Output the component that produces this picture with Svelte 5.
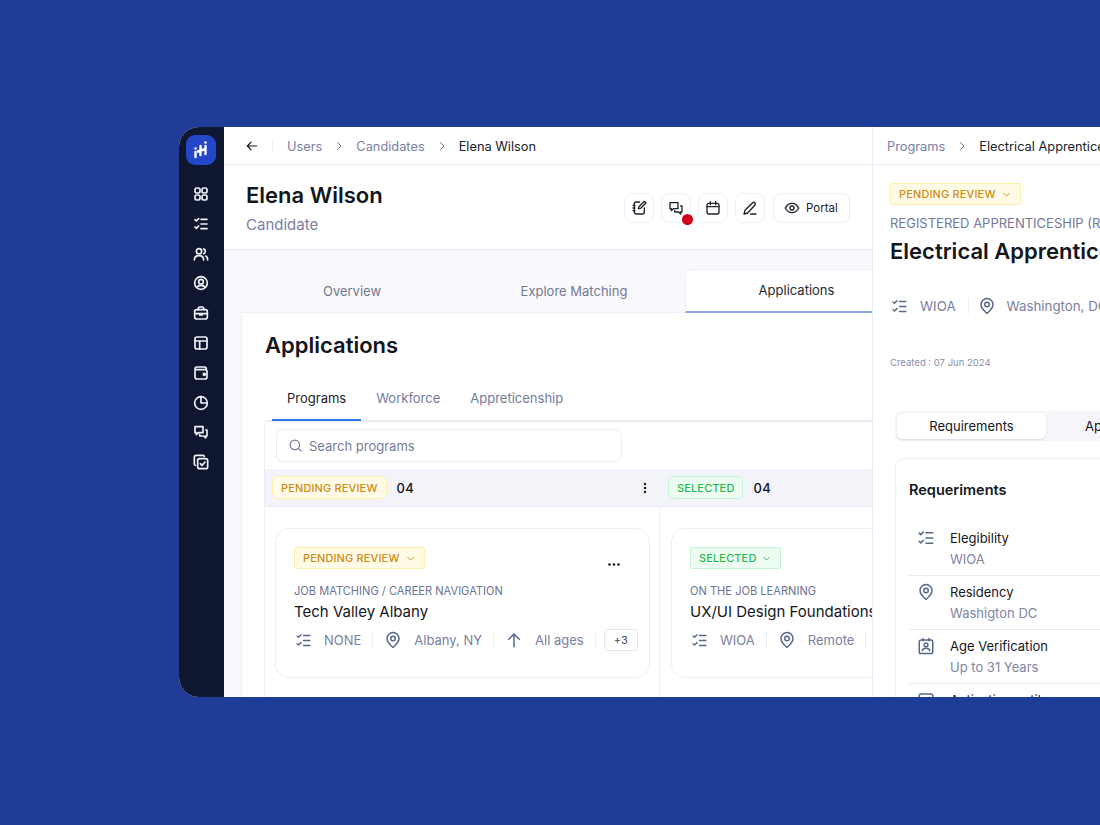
<script>
	const navIcons = ['grid', 'checks', 'users', 'account', 'case', 'table', 'wallet', 'pie', 'chat', 'copycheck'];
	const meta1 = [
		{ icon: 'checks', text: 'NONE' },
		{ icon: 'pin', text: 'Albany, NY' },
		{ icon: 'up', text: 'All ages' }
	];
	const meta2 = [
		{ icon: 'checks', text: 'WIOA' },
		{ icon: 'pin', text: 'Remote' }
	];
	const reqs = [
		{ icon: 'checks', title: 'Elegibility', value: 'WIOA' },
		{ icon: 'pin', title: 'Residency', value: 'Washigton DC' },
		{ icon: 'badge', title: 'Age Verification', value: 'Up to 31 Years' },
		{ icon: 'card', title: 'Activation until', value: '' }
	];
</script>

{#snippet icon(name, size = 16)}
	<svg class="ico" width={size} height={size} viewBox="0 0 24 24" fill="none" stroke="currentColor" stroke-width="2" stroke-linecap="round" stroke-linejoin="round">
		{#if name === 'grid'}
			<rect x="3" y="3" width="7.500" height="7.500" rx="2.500" /><rect x="13.500" y="3" width="7.500" height="7.500" rx="2.500" /><rect x="3" y="13.500" width="7.500" height="7.500" rx="2.500" /><rect x="13.500" y="13.500" width="7.500" height="7.500" rx="2.500" />
		{:else if name === 'checks'}
			<path d="M3 5.500l2 2 3.500-3.500M3 16.500l2 2 3.500-3.500M12 5h9M12 12h9M12 19h9" />
		{:else if name === 'users'}
			<circle cx="9" cy="8" r="4" /><path d="M2 21c0-4 3-6.500 7-6.500s7 2.500 7 6.500M16 4.300a4 4 0 0 1 0 7.400M19 15c2 .8 3 3 3 6" />
		{:else if name === 'account'}
			<circle cx="12" cy="12" r="9.500" /><circle cx="12" cy="10" r="3.500" /><path d="M6 18.500c1.500-2 3.500-3 6-3s4.500 1 6 3" />
		{:else if name === 'case'}
			<rect x="2.500" y="7" width="19" height="14" rx="3" /><path d="M8 7V5a2 2 0 0 1 2-2h4a2 2 0 0 1 2 2v2M2.500 13h19M10 13v2h4v-2" />
		{:else if name === 'table'}
			<rect x="3" y="3" width="18" height="18" rx="3" /><path d="M3 9h18M10 9v12" />
		{:else if name === 'wallet'}
			<path d="M20 7V6a3 3 0 0 0-3-3H6a3 3 0 0 0-3 3v12a3 3 0 0 0 3 3h12a3 3 0 0 0 3-3V10a3 3 0 0 0-3-3H3" /><circle cx="17" cy="14" r="1.500" />
		{:else if name === 'pie'}
			<circle cx="12" cy="12" r="9.500" /><path d="M12 2.500V12h9.500" />
		{:else if name === 'chat'}
			<path d="M3 4h12v9H8l-3 3v-3H3zM19 9h2v9h-2v3l-3-3h-6v-2" />
		{:else if name === 'copycheck'}
			<rect x="7" y="7" width="15" height="15" rx="3" /><path d="M17 3.500A2.500 2.500 0 0 0 15 2H5a3 3 0 0 0-3 3v10a2.500 2.500 0 0 0 1.500 2M11 14.500l2.500 2.500 4.500-5" />
		{:else if name === 'note'}
			<path d="M13 3H8a3 3 0 0 0-3 3v12a3 3 0 0 0 3 3h9a3 3 0 0 0 3-3v-6M3 8h3M3 12h3M3 16h3M11 13l1-3 8-8 2.500 2.500-8 8z" />
		{:else if name === 'calendar'}
			<rect x="3" y="5" width="18" height="16" rx="3" /><path d="M3 10h18M8 2.500V7M16 2.500V7" />
		{:else if name === 'pen'}
			<path d="M3 21l1.500-5.500L16 4a2.500 2.500 0 0 1 3.500 3.500L8.500 19.500zM13 21h8" />
		{:else if name === 'eye'}
			<path d="M2 12c2.500-4.500 6-7 10-7s7.500 2.500 10 7c-2.500 4.500-6 7-10 7s-7.500-2.500-10-7z" /><circle cx="12" cy="12" r="3" />
		{:else if name === 'pin'}
			<path d="M12 22c-4-3.500-8-7.500-8-12a8 8 0 0 1 16 0c0 4.500-4 8.500-8 12z" /><circle cx="12" cy="10" r="3" />
		{:else if name === 'up'}
			<path d="M12 21V4M5 11l7-7 7 7" />
		{:else if name === 'badge'}
			<rect x="3" y="4" width="18" height="18" rx="2.500" /><path d="M8 2v3M16 2v3" /><circle cx="12" cy="10.500" r="2.500" /><path d="M7 18c.6-2 2.500-3 5-3s4.400 1 5 3" />
		{:else if name === 'card'}
			<rect x="3" y="4" width="18" height="16" rx="2.500" /><path d="M3 10h18" />
		{:else if name === 'search'}
			<circle cx="11" cy="11" r="7.500" /><path d="M17 17l4 4" />
		{:else if name === 'chev'}
			<path d="M6 9.500l6 6 6-6" />
		{:else if name === 'left'}
			<path d="M20 12H4M10.500 5.500L4 12l6.500 6.500" />
		{:else if name === 'right'}
			<path d="M9 5l7 7-7 7" />
		{/if}
	</svg>
{/snippet}

{#snippet metaRow(items)}
	<div class="meta">
		{#each items as m}
			<span class="meta-item">
				<span class="meta-ico">{@render icon(m.icon, m.icon === 'checks' ? 17 : 18)}</span>
				<span>{m.text}</span>
			</span>
			<span class="vline"></span>
		{/each}
		{#if items.length === 3}
			<span class="more">+3</span>
		{/if}
	</div>
{/snippet}

<div class="page">
	<div class="frame">
		<aside class="sidebar">
			<div class="logo">
				<svg width="16" height="20" viewBox="0 0 16 20" fill="none" stroke="#fff" stroke-width="2.400" stroke-linecap="round">
					<path d="M2.500 12v5M7.500 6v9M12.500 6v8M5 11.500l6-2" />
					<circle cx="2.500" cy="8.500" r="1.200" fill="#fff" stroke="none" />
					<circle cx="12.500" cy="2.500" r="1.300" fill="#fff" stroke="none" />
				</svg>
			</div>
			<nav class="nav">
				{#each navIcons as n}
					<span class="nav-item">{@render icon(n, 16)}</span>
				{/each}
			</nav>
		</aside>

		<main class="main">
			<div class="crumbs">
				<span class="back">{@render icon('left', 14)}</span>
				<span class="crumb-sep"></span>
				<span class="crumb">Users</span>
				<span class="chev">{@render icon('right', 12)}</span>
				<span class="crumb">Candidates</span>
				<span class="chev">{@render icon('right', 12)}</span>
				<span class="crumb current">Elena Wilson</span>
			</div>

			<header class="head">
				<div>
					<h1>Elena Wilson</h1>
					<p>Candidate</p>
				</div>
				<div class="actions">
					<button class="act">{@render icon('note', 16)}</button>
					<button class="act">
						{@render icon('chat', 16)}
						<span class="dot"></span>
					</button>
					<button class="act">{@render icon('calendar', 16)}</button>
					<button class="act">{@render icon('pen', 16)}</button>
					<button class="act portal">{@render icon('eye', 16)}<span>Portal</span></button>
				</div>
			</header>

			<div class="body">
				<div class="tabs">
					<span class="tab">Overview</span>
					<span class="tab">Explore Matching</span>
					<span class="tab active">Applications</span>
				</div>

				<section class="apps">
					<h2>Applications</h2>
					<div class="subtabs">
						<span class="sub active">Programs</span>
						<span class="sub">Workforce</span>
						<span class="sub">Appreticenship</span>
					</div>

					<div class="board">
						<div class="search-row">
							<div class="search">
								{@render icon('search', 15)}
								<span>Search programs</span>
							</div>
						</div>

						<div class="col-heads">
							<div class="col-head first">
								<span class="pill yellow rounded">PENDING REVIEW</span>
								<span class="count">04</span>
								<svg class="kebab" width="4" height="12" viewBox="0 0 4 12" fill="#15171f"><circle cx="2" cy="2" r="1.200" /><circle cx="2" cy="6" r="1.200" /><circle cx="2" cy="10" r="1.200" /></svg>
							</div>
							<div class="col-head">
								<span class="pill green rounded">SELECTED</span>
								<span class="count">04</span>
							</div>
						</div>

						<div class="cols">
							<div class="col first">
								<article class="card">
									<div class="card-top">
										<span class="pill yellow">PENDING REVIEW {@render icon('chev', 11)}</span>
										<svg class="dots" width="12" height="3" viewBox="0 0 12 3" fill="#15171f"><circle cx="1.500" cy="1.500" r="1.300" /><circle cx="6" cy="1.500" r="1.300" /><circle cx="10.500" cy="1.500" r="1.300" /></svg>
									</div>
									<div class="kind">JOB MATCHING / CAREER NAVIGATION</div>
									<div class="title">Tech Valley Albany</div>
									{@render metaRow(meta1)}
								</article>
							</div>
							<div class="col">
								<article class="card wide">
									<div class="card-top">
										<span class="pill green">SELECTED {@render icon('chev', 11)}</span>
									</div>
									<div class="kind">ON THE JOB LEARNING</div>
									<div class="title">UX/UI Design Foundations</div>
									{@render metaRow(meta2)}
								</article>
							</div>
						</div>
					</div>
				</section>
			</div>
		</main>

		<aside class="detail">
			<div class="crumbs detail-crumbs">
				<span class="crumb">Programs</span>
				<span class="chev">{@render icon('right', 12)}</span>
				<span class="crumb current">Electrical Apprenticeship</span>
			</div>
			<div class="detail-body">
				<span class="pill yellow">PENDING REVIEW {@render icon('chev', 11)}</span>
				<div class="reg">REGISTERED APPRENTICESHIP (RA)</div>
				<div class="big">Electrical Apprenticeship</div>
				<div class="d-meta">
					<span class="meta-ico">{@render icon('checks', 17)}</span>
					<span>WIOA</span>
					<span class="vline"></span>
					<span class="meta-ico">{@render icon('pin', 18)}</span>
					<span class="place">Washington, DC</span>
				</div>
				<div class="created">Created : 07 Jun 2024</div>

				<div class="seg">
					<span class="seg-item on">Requirements</span>
					<span class="seg-item">Application</span>
				</div>

				<section class="req-card">
					<h3>Requeriments</h3>
					{#each reqs as r}
						<div class="req">
							<span class="req-ico">{@render icon(r.icon, 18)}</span>
							<div>
								<div class="req-title">{r.title}</div>
								<div class="req-val">{r.value}</div>
							</div>
						</div>
					{/each}
				</section>
			</div>
		</aside>
	</div>
</div>

<style>
	:global(body) {
		margin: 0;
		background: #1f3c96;
		font-family: Inter, 'Liberation Sans', sans-serif;
	}

	.page {
		height: 825px;
		padding: 127px 0 0 179px;
		box-sizing: border-box;
		overflow: hidden;
	}

	.frame {
		display: flex;
		width: 921px;
		height: 570px;
		overflow: hidden;
		background: #fff;
		border-radius: 20px 0 0 20px;
		color: #14161d;
	}

	.ico {
		display: block;
		flex: none;
	}

	.sidebar {
		flex: none;
		width: 45px;
		background: #0f1630;
		display: flex;
		flex-direction: column;
		align-items: center;
		padding-top: 8px;
		box-sizing: border-box;
	}

	.logo {
		width: 30px;
		height: 30px;
		margin-left: -1px;
		border-radius: 9px;
		background: #2347c8;
		display: flex;
		align-items: center;
		justify-content: center;
	}

	.nav {
		display: flex;
		flex-direction: column;
		margin-top: 21px;
		margin-left: -1px;
		color: #f1f3f8;
		gap: 13.800px;
	}

	.nav-item {
		display: block;
		height: 16px;
	}

	.nav-item :global(svg) {
		stroke-width: 2.500;
	}

	.main {
		flex: none;
		width: 648px;
		overflow: hidden;
		display: flex;
		flex-direction: column;
		border-right: 1px solid #e7eaf6;
		box-sizing: content-box;
	}

	.crumbs {
		flex: none;
		height: 36px;
		padding-top: 1px;
		border-bottom: 1px solid #e8ecf7;
		display: flex;
		align-items: center;
		padding-left: 21px;
		font-size: 12.800px;
		color: #7a80a0;
		white-space: nowrap;
	}

	.back {
		color: #14161d;
	}

	.crumb-sep {
		width: 1px;
		height: 14px;
		background: #eceef5;
		margin: 0 14px 0 13px;
	}

	.chev {
		margin: 0 11px 0 11px;
		color: #6f7691;
	}

	.current {
		color: #20222b;
	}

	.head {
		flex: none;
		height: 85px;
		box-sizing: border-box;
		border-bottom: 1px solid #e9eaef;
		padding: 18px 22px 0;
		display: flex;
		justify-content: space-between;
	}

	h1 {
		margin: 0;
		font-size: 22px;
		line-height: 24px;
		font-weight: 600;
	}

	.head p {
		margin: 8px 0 0;
		font-size: 15px;
		line-height: 20px;
		color: #7a80a0;
	}

	.actions {
		display: flex;
		gap: 7px;
		margin-top: 10px;
		height: 30px;
	}

	.act {
		position: relative;
		width: 30px;
		height: 30px;
		padding: 0;
		background: #fff;
		border: 1px solid #eeeff5;
		border-radius: 8px;
		color: #1d2029;
		display: flex;
		align-items: center;
		justify-content: center;
		font-family: inherit;
	}

	.portal {
		width: 77px;
		margin-left: 1px;
		gap: 6px;
		font-size: 11.500px;
		justify-content: flex-start;
		padding-left: 10px;
	}

	.dot {
		position: absolute;
		right: -3px;
		bottom: -3px;
		width: 11px;
		height: 11px;
		border-radius: 50%;
		background: #d0021b;
	}

	.body {
		flex: 1;
		min-height: 0;
		background: #f9f9fd;
		padding-top: 19px;
		padding-left: 17px;
		display: flex;
		flex-direction: column;
	}

	.tabs {
		flex: none;
		display: grid;
		grid-template-columns: 222px 222px 222px;
		height: 44px;
		font-size: 13px;
		color: #737992;
	}

	.tab {
		display: flex;
		align-items: center;
		justify-content: center;
		padding-top: 1px;
		border-bottom: 1px solid #eef0f6;
	}

	.tab.active {
		background: #fff;
		color: #262833;
		border: 1px solid #eceef6;
		border-bottom: 2px solid #8aa6ef;
		border-right: 0;
		border-radius: 5px 0 0 0;
		padding-top: 0;
		padding-bottom: 2px;
		box-sizing: border-box;
	}

	.apps {
		flex: 1;
		min-height: 0;
		background: #fff;
		border-left: 1px solid #eceef6;
		padding-left: 23px;
	}

	h2 {
		margin: 18px 0 0;
		font-size: 22px;
		line-height: 28px;
		font-weight: 600;
	}

	.subtabs {
		display: flex;
		margin: 25px 0 0;
		height: 36px;
		border-bottom: 2px solid #e9ebf3;
		font-size: 13px;
		color: #737a9c;
		padding-left: 7px;
	}

	.sub {
		padding: 6px 15px 0;
		height: 37px;
		box-sizing: border-box;
	}

	.sub.active {
		color: #1f2129;
		border-bottom: 2px solid #2f78e8;
	}

	.board {
		margin-left: -1px;
		border-left: 1px solid #eceef6;
		border-radius: 5px 0 0 0;
	}

	.search-row {
		height: 47px;
		padding: 7px 0 0 11px;
		box-sizing: border-box;
	}

	.search {
		width: 346px;
		height: 33px;
		box-sizing: border-box;
		border: 1px solid #e9ebf5;
		border-radius: 7px;
		display: flex;
		align-items: center;
		gap: 6px;
		padding-left: 11px;
		font-size: 13px;
		color: #757b99;
	}

	.col-heads {
		display: grid;
		grid-template-columns: 395px 1fr;
		height: 38px;
		background: #f3f4f9;
		border-bottom: 1px solid #e9ebf2;
		box-sizing: border-box;
	}

	.col-head {
		display: flex;
		align-items: center;
		padding-left: 8px;
		gap: 10px;
	}

	.col-head.first {
		padding-left: 7px;
		padding-right: 13px;
	}

	.kebab {
		margin-left: auto;
	}

	.count {
		font-size: 13px;
		font-weight: 500;
		letter-spacing: 0.3px;
	}

	.pill {
		display: inline-flex;
		align-items: center;
		gap: 5px;
		height: 22px;
		box-sizing: border-box;
		padding: 0 8px;
		font-size: 10.900px;
		font-weight: 500;
		letter-spacing: 0.2px;
		border: 1px solid;
		border-radius: 2px;
		white-space: nowrap;
	}

	.pill.rounded {
		border-radius: 6px;
		height: 23px;
	}

	.yellow {
		background: #fffbe6;
		border-color: #fdf0a8;
		color: #cf8a12;
	}

	.green {
		background: #edfdf2;
		border-color: #c3f5d3;
		color: #1fb84f;
	}

	.cols {
		display: grid;
		grid-template-columns: 395px 1fr;
		height: 191px;
	}

	.col {
		padding: 21px 0 0 11px;
		overflow: hidden;
	}

	.col.first {
		padding-left: 10px;
		border-right: 1px solid #eceef6;
	}

	.card {
		width: 375px;
		height: 150px;
		box-sizing: border-box;
		border: 1px solid #eceef6;
		border-radius: 14px;
		padding: 18px 0 0 18px;
	}

	.wide {
		width: 400px;
	}

	.card-top {
		display: flex;
		justify-content: space-between;
		align-items: center;
		padding-right: 29px;
	}

	.dots {
		margin-top: 12px;
	}

	.kind {
		margin-top: 15px;
		font-size: 11.100px;
		line-height: 14px;
		color: #6c7393;
		white-space: nowrap;
	}

	.title {
		margin-top: 4px;
		font-size: 15px;
		line-height: 20px;
		color: #14161d;
		white-space: nowrap;
	}

	.meta {
		display: flex;
		align-items: center;
		margin-top: 7px;
		padding-left: 1px;
		height: 22px;
		font-size: 13px;
		color: #7a80a0;
		white-space: nowrap;
	}

	.meta-item {
		display: flex;
		align-items: center;
		gap: 12px;
	}

	.meta-ico {
		color: #56698c;
	}

	.vline {
		width: 1px;
		height: 16px;
		background: #eceef5;
		margin: 0 11px;
	}

	.more {
		margin-left: -3px;
		width: 34px;
		height: 22px;
		border: 1px solid #e6e8f0;
		border-radius: 3px;
		display: flex;
		align-items: center;
		justify-content: center;
		font-size: 11px;
		color: #444857;
		box-sizing: border-box;
	}

	.detail {
		flex: none;
		width: 400px;
		display: flex;
		flex-direction: column;
	}

	.detail-crumbs {
		padding-left: 14px;
	}

	.detail-body {
		padding: 17px 0 0 17px;
	}

	.reg {
		margin-top: 10px;
		font-size: 13px;
		line-height: 16px;
		color: #71789a;
		white-space: nowrap;
	}

	.big {
		margin-top: 6px;
		font-size: 22px;
		line-height: 28px;
		font-weight: 600;
		white-space: nowrap;
	}

	.d-meta {
		display: flex;
		align-items: center;
		margin-top: 29px;
		padding-left: 1px;
		height: 24px;
		font-size: 13.300px;
		color: #7a80a0;
		gap: 12px;
		white-space: nowrap;
	}

	.d-meta .vline {
		margin: 0 -3px 0 0;
	}

	.place {
		margin-left: -1px;
	}

	.created {
		margin-top: 38px;
		font-size: 9.500px;
		line-height: 14px;
		color: #8a8fa8;
	}

	.seg {
		display: flex;
		width: 400px;
		height: 30px;
		margin: 41px 0 0 5px;
		background: #f5f5fa;
		border-radius: 6px;
		font-size: 13px;
		align-items: center;
		white-space: nowrap;
	}

	.seg-item {
		height: 26px;
		display: flex;
		align-items: center;
		justify-content: center;
		border-radius: 6px;
		margin-left: 39px;
	}

	.seg-item.on {
		width: 149px;
		margin-left: 2px;
		background: #fff;
		box-shadow: 0 1px 2px #d8dae5;
	}

	.req-card {
		margin: 17px 0 0 5px;
		border: 1px solid #eceef6;
		border-radius: 10px;
		padding: 22px 0 0 13px;
		height: 300px;
		box-sizing: border-box;
	}

	h3 {
		margin: 0 0 23px;
		font-size: 14.500px;
		line-height: 18px;
		font-weight: 600;
	}

	.req {
		display: flex;
		gap: 15px;
		padding: 7px 0 6px 8px;
		height: 54px;
		box-sizing: border-box;
		border-bottom: 1px solid #e9ebf2;
	}

	.req-ico {
		color: #56698c;
	}

	.req-title {
		font-size: 13px;
		line-height: 18px;
		white-space: nowrap;
	}

	.req-val {
		margin-top: 3px;
		font-size: 13px;
		line-height: 18px;
		color: #7f85a4;
		white-space: nowrap;
	}
</style>
